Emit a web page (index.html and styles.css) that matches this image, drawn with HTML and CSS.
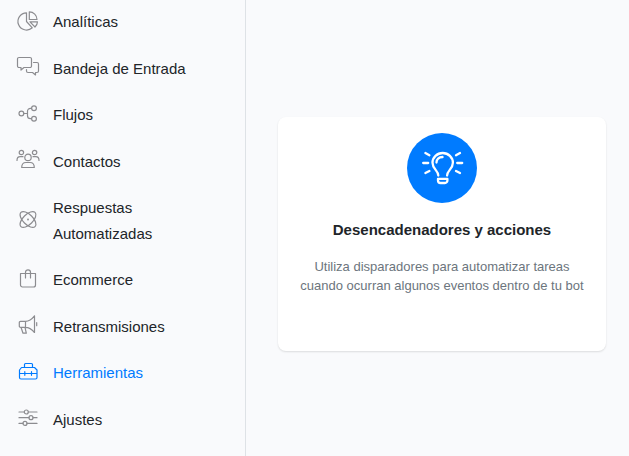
FILE: index.html
```
<!DOCTYPE html>
<html lang="es">
<head>
  <meta charset="UTF-8" />
  <meta name="viewport" content="width=device-width, initial-scale=1" />
  <title>Herramientas</title>
  <link rel="stylesheet" href="styles.css">
</head>
<body>
  <!-- Sidebar -->
  <nav class="sidebar">
    <a class="nav-link" href="#">
      <svg class="nav-icon" viewBox="0 0 24 24"><path d="M10.5 3.8V12.5L16.3 18.8A8.6 8.6 0 1 1 10.5 3.8Z"/><path d="M13.3 2.8V10.5H21A7.7 7.7 0 0 0 13.3 2.8Z"/><path d="M14 12.8H21.5A7.5 7.5 0 0 1 19 18Z"/></svg>
      <span>Analíticas</span>
    </a>
    <a class="nav-link" href="#">
      <svg class="nav-icon" viewBox="0 0 24 24"><path d="M3 2.5H14a1.5 1.5 0 0 1 1.5 1.5V11a1.5 1.5 0 0 1-1.5 1.5H8L5 15V12.5H3A1.5 1.5 0 0 1 1.5 11V4A1.5 1.5 0 0 1 3 2.5Z"/><path d="M17.5 7.5H21A1.5 1.5 0 0 1 22.5 9V16a1.5 1.5 0 0 1-1.5 1.5H19.5V20L16.5 17.5H12A1.5 1.5 0 0 1 10.5 16V14.5"/></svg>
      <span>Bandeja de Entrada</span>
    </a>
    <a class="nav-link" href="#">
      <svg class="nav-icon" viewBox="0 0 24 24"><circle cx="5.4" cy="11.5" r="2.4"/><circle cx="18" cy="6.3" r="2.4"/><circle cx="18" cy="16.7" r="2.4"/><path d="M7.8 11.5H11.5M15.6 6.3H14.5a3 3 0 0 0-3 3V13.7a3 3 0 0 0 3 3H15.6"/></svg>
      <span>Flujos</span>
    </a>
    <a class="nav-link" href="#">
      <svg class="nav-icon" viewBox="0 0 24 24"><circle cx="12" cy="9.4" r="3.2"/><circle cx="5.4" cy="4.5" r="2.2"/><circle cx="18.6" cy="4.5" r="2.2"/><path d="M5.7 19.5C5.7 16.4 7.5 14.5 10 14.5H14C16.5 14.5 18.3 16.4 18.3 19.5ZM1 12.4C1 10 2.2 8.7 4.2 8.7H7M23 12.4C23 10 21.8 8.7 19.8 8.7H17"/></svg>
      <span>Contactos</span>
    </a>
    <a class="nav-link" href="#">
      <svg class="nav-icon" viewBox="0 0 24 24"><ellipse cx="12" cy="11.5" rx="10" ry="5" transform="rotate(45 12 11.5)"/><ellipse cx="12" cy="11.5" rx="10" ry="5" transform="rotate(-45 12 11.5)"/><circle cx="12" cy="11.5" r=".4"/></svg>
      <span>Respuestas Automatizadas</span>
    </a>
    <a class="nav-link" href="#">
      <svg class="nav-icon" viewBox="0 0 24 24"><path d="M4.5 6.5H19.5V18A2 2 0 0 1 17.5 20H6.5A2 2 0 0 1 4.5 18ZM9.5 11V5.3a2.5 2.5 0 0 1 5 0V11"/></svg>
      <span>Ecommerce</span>
    </a>
    <a class="nav-link" href="#">
      <svg class="nav-icon" viewBox="0 0 24 24"><path d="M4.5 8.3H9.5C13 8.3 16 6 18.5 2.8V19.5C16 16.5 13 14.3 9.5 14.3H4.5A1.2 1.2 0 0 1 3.3 13V9.5A1.2 1.2 0 0 1 4.5 8.3ZM9.5 8.3V14.3M5 14.3L7 20.2H10.3L9 14.3M20.7 9.7V12.7"/></svg>
      <span>Retransmisiones</span>
    </a>
    <a class="nav-link active" href="#">
      <svg class="nav-icon" viewBox="0 0 24 24"><path d="M5.5 7.5H18.5L21 10V17.5A1.5 1.5 0 0 1 19.5 19H5A1.5 1.5 0 0 1 3.5 17.5V10ZM8.5 7.5V4.5A1 1 0 0 1 9.5 3.5H15.5A1 1 0 0 1 16.5 4.5V7.5M3.5 13.5H21M8.8 11.7V15.3M15.5 11.7V15.3"/></svg>
      <span>Herramientas</span>
    </a>
    <a class="nav-link" href="#">
      <svg class="nav-icon" viewBox="0 0 24 24"><circle cx="10.3" cy="6" r="2"/><circle cx="15" cy="11.7" r="2"/><circle cx="9" cy="17.4" r="2"/><path d="M3 6H8.3M12.3 6H21M3 11.7H13M17 11.7H21M3 17.4H7M11 17.4H21"/></svg>
      <span>Ajustes</span>
    </a>
  </nav>

  <!-- Tools -->
  <main class="content">
    <a class="card" href="#">
      <span class="card-icon">
        <svg viewBox="0 0 70 70"><path d="M31.3 42.5C31.3 37.5 25.5 36 25.5 29.8A10.2 9.8 0 0 1 45.9 29.8C45.9 36 40.1 37.5 40.1 42.5M29.5 29.5C29.5 26.5 31.8 24.2 35.5 24M31 45.8H40.4V47.5A2.5 2.5 0 0 1 37.9 50H33.5A2.5 2.5 0 0 1 31 47.5ZM18.4 20L22.4 22.2M16.2 30H21.2M18.4 40L22.4 38M53 20L49 22.2M55.2 30H50.2M53 40L49 38"/></svg>
      </span>
      <h2 class="card-title">Desencadenadores y acciones</h2>
      <p class="card-text">Utiliza disparadores para automatizar tareas cuando ocurran algunos eventos dentro de tu bot</p>
    </a>
  </main>
</body>
</html>
```
FILE: styles.css
```
* {
  box-sizing: border-box;
}

body {
  margin: 0;
  min-height: 100vh;
  display: flex;
  background: #f9fafc;
  color: #212529;
  font-family: "Liberation Sans", Arial, sans-serif;
  font-size: 15px;
  line-height: 1.7;
}

a {
  color: inherit;
  text-decoration: none;
}

/* Sidebar */
.sidebar {
  width: 246px;
  flex-shrink: 0;
  display: flex;
  flex-direction: column;
  gap: 1px;
  border-right: 1px solid #dee2e6;
}

.nav-link {
  display: flex;
  align-items: center;
  gap: 13px;
  padding: 9px 24px 11px 16px;
}

.nav-icon {
  width: 24px;
  height: 24px;
  flex-shrink: 0;
  margin: -1px 0 1px;
  fill: none;
  stroke: #8c8c90;
  stroke-width: 1.2;
  stroke-linecap: round;
  stroke-linejoin: round;
}

.nav-link.active {
  color: #007bff;
}

.active .nav-icon {
  stroke: #007bff;
}

/* Tools */
.content {
  flex: 1;
  padding: 117px 23px 24px 32px;
}

.card {
  display: flex;
  flex-direction: column;
  align-items: center;
  min-height: 234px;
  padding: 16px;
  background: #fff;
  border-radius: 8px;
  box-shadow: 0 1px 2px rgba(0, 0, 0, 0.12);
  text-align: center;
}

.card-icon {
  width: 70px;
  height: 70px;
  border-radius: 50%;
  background: #007bff;
}

.card-icon svg {
  display: block;
  fill: none;
  stroke: #fff;
  stroke-width: 2.3;
  stroke-linecap: round;
  stroke-linejoin: round;
}

.card-title {
  margin: 16px 0;
  font-size: 15px;
  line-height: 22px;
}

.card-text {
  margin: 0;
  color: #6c757d;
  font-size: 13px;
  line-height: 19px;
}
```
